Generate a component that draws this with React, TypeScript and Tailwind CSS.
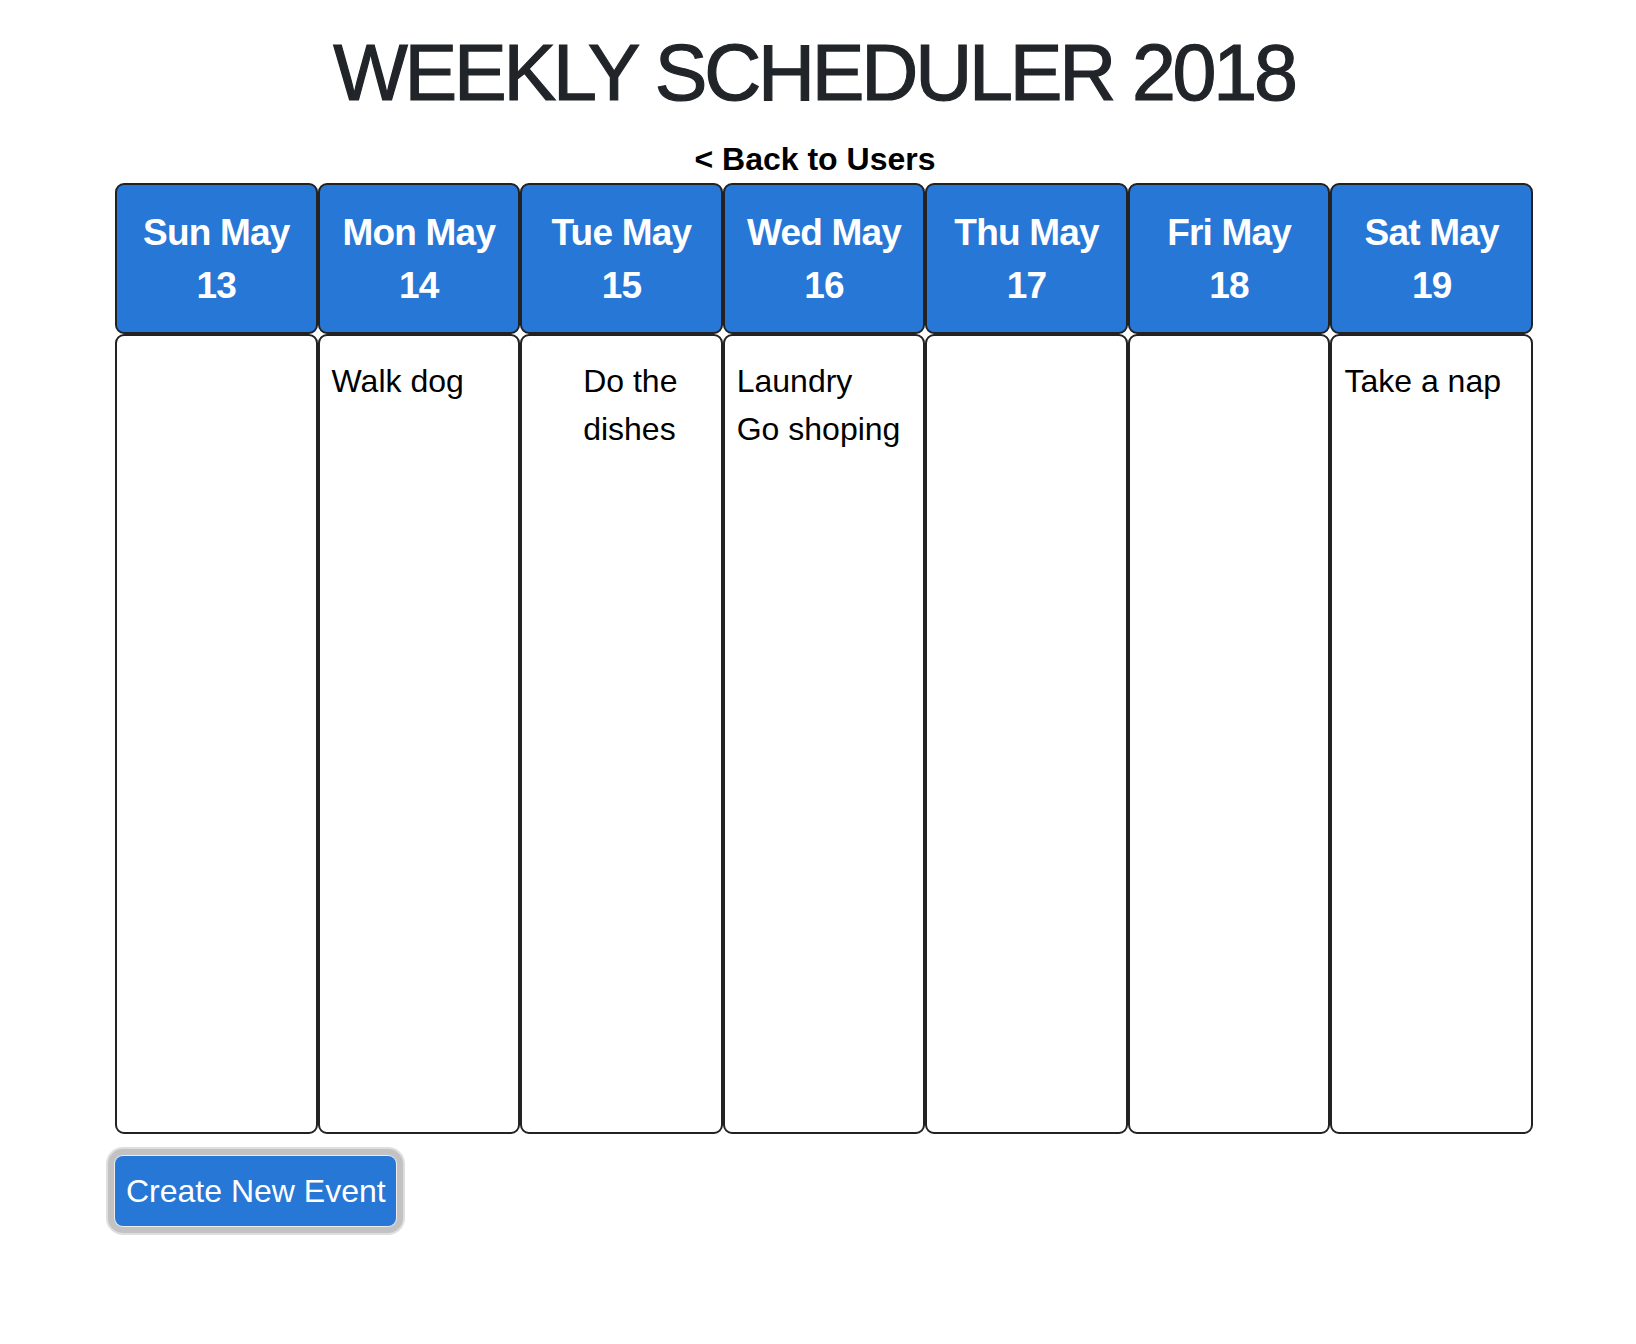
import React from "react";

const days = [
  { d: "Sun May", n: "13", events: [] as string[] },
  { d: "Mon May", n: "14", events: ["Walk dog"] },
  { d: "Tue May", n: "15", events: ["Do the dishes"], indent: true },
  { d: "Wed May", n: "16", events: ["Laundry", "Go shoping"] },
  { d: "Thu May", n: "17", events: [] as string[] },
  { d: "Fri May", n: "18", events: [] as string[] },
  { d: "Sat May", n: "19", events: ["Take a nap"] },
];

export default function App() {
  return (
    <div
      className="w-[1636px] min-h-[1344px] bg-white"
      style={{ fontFamily: '"Liberation Sans", Arial, sans-serif' }}
    >
      <h1 className="pt-[25px] pr-[8px] text-center text-[79px] leading-[95px] tracking-[-3.2px] text-[#212529] font-normal [-webkit-text-stroke:1.2px_#212529]">
        WEEKLY SCHEDULER 2018
      </h1>
      <div className="mt-[15px] pr-[6px] text-center text-[32px] leading-[48px] font-bold text-black">
        &lt; Back to Users
      </div>
      <div className="ml-[115px] w-[1418px]">
        <div className="grid grid-cols-7">
          {days.map((day) => (
            <div
              key={day.d}
              className="h-[151px] rounded-[9px] border-2 border-[#222] bg-[#2777d6] flex flex-col items-center justify-center text-white font-bold text-[37px] leading-[53px] tracking-[-0.8px]"
            >
              <div>{day.d}</div>
              <div>{day.n}</div>
            </div>
          ))}
        </div>
        <div className="grid grid-cols-7">
          {days.map((day) => (
            <div
              key={day.d}
              className="h-[800px] rounded-[9px] border-2 border-[#222] bg-white pt-[21px] pl-[12px] pr-[12px] text-[32px] leading-[48px] text-black"
            >
              {day.events.map((e) => (
                <div key={e} className={day.indent ? "ml-[49px]" : ""}>
                  {e}
                </div>
              ))}
            </div>
          ))}
        </div>
        <div className="mt-[22px]">
          <button className="h-[70px] w-[281px] rounded-[8px] bg-[#2777d6] pl-[11px] text-left text-[32px] text-white shadow-[0_0_0_1px_#ececec,0_0_0_7px_#c2c2c2,0_0_0_9px_#dedede]">
            Create New Event
          </button>
        </div>
      </div>
    </div>
  );
}
